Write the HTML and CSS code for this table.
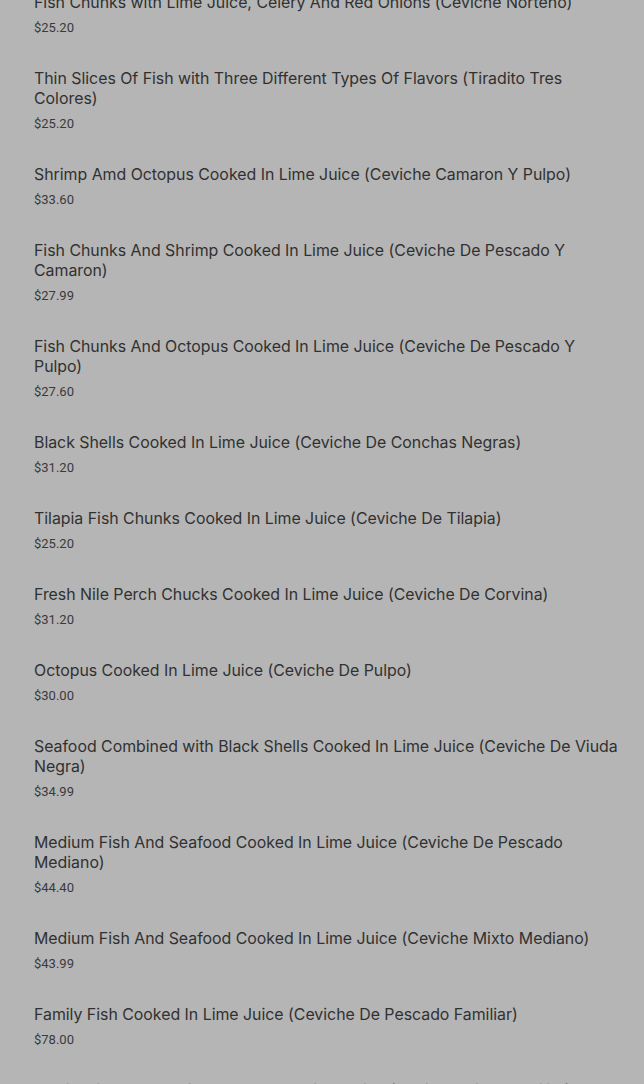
FILE: index.html
```html
<!DOCTYPE html>
<html>
<head>
<meta charset="utf-8">
<link rel="stylesheet" href="styles.css">
</head>
<body>
<ul class="menu">
  <li class="item"><h3 class="name">Fish Chunks with Lime Juice, Celery And Red Onions (Ceviche Norteno)</h3><p class="price">$25.20</p></li>
  <li class="item"><h3 class="name">Thin Slices Of Fish with Three Different Types Of Flavors (Tiradito Tres Colores)</h3><p class="price">$25.20</p></li>
  <li class="item"><h3 class="name">Shrimp Amd Octopus Cooked In Lime Juice (Ceviche Camaron Y Pulpo)</h3><p class="price">$33.60</p></li>
  <li class="item"><h3 class="name">Fish Chunks And Shrimp Cooked In Lime Juice (Ceviche De Pescado Y Camaron)</h3><p class="price">$27.99</p></li>
  <li class="item"><h3 class="name">Fish Chunks And Octopus Cooked In Lime Juice (Ceviche De Pescado Y Pulpo)</h3><p class="price">$27.60</p></li>
  <li class="item"><h3 class="name">Black Shells Cooked In Lime Juice (Ceviche De Conchas Negras)</h3><p class="price">$31.20</p></li>
  <li class="item"><h3 class="name">Tilapia Fish Chunks Cooked In Lime Juice (Ceviche De Tilapia)</h3><p class="price">$25.20</p></li>
  <li class="item"><h3 class="name">Fresh Nile Perch Chucks Cooked In Lime Juice (Ceviche De Corvina)</h3><p class="price">$31.20</p></li>
  <li class="item"><h3 class="name">Octopus Cooked In Lime Juice (Ceviche De Pulpo)</h3><p class="price">$30.00</p></li>
  <li class="item"><h3 class="name">Seafood Combined with Black Shells Cooked In Lime Juice (Ceviche De Viuda Negra)</h3><p class="price">$34.99</p></li>
  <li class="item"><h3 class="name">Medium Fish And Seafood Cooked In Lime Juice (Ceviche De Pescado Mediano)</h3><p class="price">$44.40</p></li>
  <li class="item"><h3 class="name">Medium Fish And Seafood Cooked In Lime Juice (Ceviche Mixto Mediano)</h3><p class="price">$43.99</p></li>
  <li class="item"><h3 class="name">Family Fish Cooked In Lime Juice (Ceviche De Pescado Familiar)</h3><p class="price">$78.00</p></li>
  <li class="item"><h3 class="name">Family Fish And Seafood Cooked In Lime Juice (Ceviche Mixto Familiar)</h3><p class="price">$78.00</p></li>
</ul>
</body>
</html>
```

FILE: styles.css
```css
html, body {
  margin: 0;
  padding: 0;
  background: #b5b5b5;
  height: 1084px;
  overflow: hidden;
}
.menu {
  list-style: none;
  margin: -7px 0 0 0;
  padding: 0 20px 0 34px;
  display: flex;
  flex-direction: column;
  gap: 32px;
  font-family: Inter, Roboto, "Liberation Sans", sans-serif;
  color: #313131;
}
.item {
  display: flex;
  flex-direction: column;
  gap: 6px;
}
.name {
  margin: 0;
  font-size: 15.9px;
  line-height: 20px;
  font-weight: 400;
  letter-spacing: -0.02px;
}
.price {
  margin: 0;
  font-family: Roboto, "Liberation Sans", sans-serif;
  font-size: 13px;
  line-height: 18px;
  font-weight: 400;
  color: #3a3a3a;
}
```
